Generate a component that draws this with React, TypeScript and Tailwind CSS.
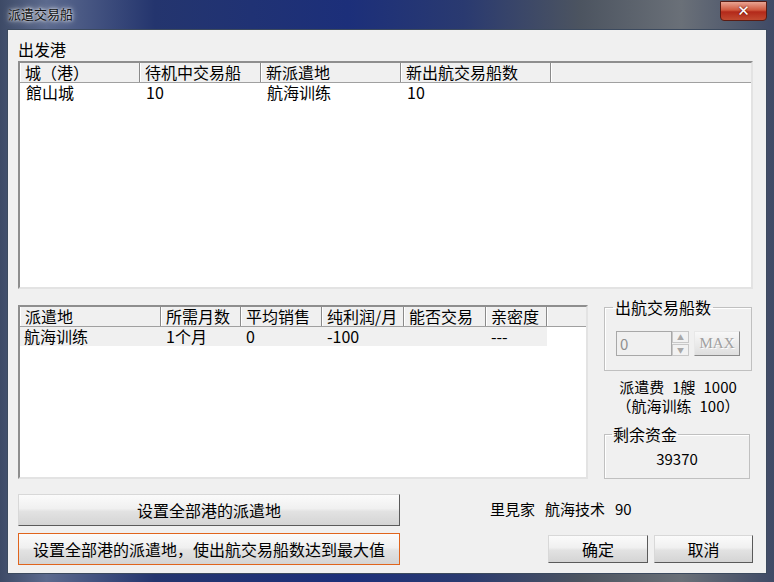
import React from 'react';

const font = { fontFamily: '"Noto Sans CJK SC", "Liberation Sans", sans-serif' };

interface Col {
  title: string;
  width: number;
}

const HeaderRow: React.FC<{ cols: Col[] }> = ({ cols }) => (
  <div className="flex h-[20px] shrink-0 border-b border-b-[#a0a0a0] bg-[#f0f0f0]">
    {cols.map((c) => (
      <div
        key={c.title}
        className="h-full shrink-0 border-r border-r-[#8a8a8a] pl-[5px] leading-[19px] shadow-[inset_1px_0_0_#ffffff]"
        style={{ width: c.width }}
      >
        {c.title}
      </div>
    ))}
    <div className="flex-1 shadow-[inset_1px_0_0_#ffffff]" />
  </div>
);

const SunkenBox: React.FC<{ className?: string; children: React.ReactNode }> = ({ className, children }) => (
  <div className={`border-2 border-t-[#8e8e8e] border-l-[#8e8e8e] border-r-[#e3e3e3] border-b-[#e3e3e3] bg-white ${className ?? ''}`}>
    <div className="flex h-full flex-col">{children}</div>
  </div>
);

const WinButton: React.FC<{ className?: string; children: React.ReactNode; focused?: boolean }> = ({
  className,
  children,
  focused,
}) => (
  <div
    className={`flex items-center justify-center border ${
      focused ? 'border-[#e0641c]' : 'border-t-[#d8d8d8] border-l-[#d8d8d8] border-r-[#5a5a5a] border-b-[#5a5a5a]'
    } bg-[linear-gradient(#fbfbfb_0%,#f0f0f0_45%,#e2e2e2_55%,#d4d4d4_100%)] text-[16px] text-black ${className ?? ''}`}
  >
    {children}
  </div>
);

export default function App() {
  const topCols: Col[] = [
    { title: '城（港）', width: 120 },
    { title: '待机中交易船', width: 121 },
    { title: '新派遣地', width: 140 },
    { title: '新出航交易船数', width: 150 },
  ];
  const lowCols: Col[] = [
    { title: '派遣地', width: 141 },
    { title: '所需月数', width: 80 },
    { title: '平均销售', width: 81 },
    { title: '纯利润/月', width: 82 },
    { title: '能否交易', width: 82 },
    { title: '亲密度', width: 61 },
  ];

  return (
    <div
      className="flex h-[582px] w-[774px] flex-col bg-[linear-gradient(90deg,#3d4a66_0%,#5c6a8e_6%,#24356e_20%,#1c2f7a_45%,#2a3a70_60%,#4c5460_75%,#6a7078_88%,#3f4a66_100%)] text-[16px] text-black"
      style={font}
    >
      {/* title bar */}
      <div className="flex h-[29px] shrink-0 items-start justify-between pl-[8px]">
        <div className="mt-[6px] text-[13px] leading-[16px] text-[#111] [text-shadow:0_0_6px_#ffffff,0_0_3px_#ffffff]">
          派遣交易船
        </div>
        <div className="mr-[7px] mt-[1px] flex h-[20px] w-[47px] items-center justify-center rounded-b-[4px] border border-[#5a1c14] bg-[linear-gradient(#e9a493_0%,#d0583e_45%,#b3291a_55%,#c24a30_100%)]">
          <span className="text-[15px] font-bold leading-none text-white [text-shadow:0_0_2px_#400]" style={{ fontFamily: '"DejaVu Sans", sans-serif' }}>
            ✕
          </span>
        </div>
      </div>

      {/* client area */}
      <div className="mx-[7px] mb-[8px] flex flex-1 flex-col border border-[#3c4a5e] bg-[#f0f0f0] pl-[10px] pr-[13px]">
        <div className="mt-[8px] h-[22px] leading-[22px]">出发港</div>

        <SunkenBox className="mt-[1px] h-[228px]">
          <HeaderRow cols={topCols} />
          <div className="flex h-[20px] leading-[18px]">
            <div className="w-[120px] pl-[6px]">館山城</div>
            <div className="w-[121px] pl-[6px]">10</div>
            <div className="w-[140px] pl-[6px]">航海训练</div>
            <div className="w-[150px] pl-[6px]">10</div>
          </div>
        </SunkenBox>

        <div className="mt-[16px] flex h-[174px] gap-[16px]">
          <SunkenBox className="h-full w-[570px]">
            <HeaderRow cols={lowCols} />
            <div className="flex h-[19px] w-[527px] bg-[#f0f0f0] leading-[18px]">
              <div className="w-[141px] pl-[4px]">航海训练</div>
              <div className="w-[80px] pl-[5px]">1个月</div>
              <div className="w-[81px] pl-[5px]">0</div>
              <div className="w-[82px] pl-[5px]">-100</div>
              <div className="w-[82px] pl-[5px]" />
              <div className="w-[61px] pl-[5px]">---</div>
            </div>
          </SunkenBox>

          <div className="flex w-[148px] flex-col">
            <fieldset className="-mt-[7px] h-[74px] border border-[#c0c0c0] px-[11px] pt-[15px] shadow-[inset_1px_1px_0_#ffffff]">
              <legend className="ml-[-3px] px-[2px] leading-[18px]">出航交易船数</legend>
              <div className="flex h-[25px] items-center">
                <div className="flex h-[25px] w-[56px] items-center border border-[#a8a8a8] bg-[#f0f0f0] pl-[3px] text-[15px] leading-none text-[#8f8f8f]">
                  0
                </div>
                <div className="flex h-[25px] w-[17px] flex-col">
                  <div className="flex h-[12px] items-center justify-center border border-[#c8c8c8] bg-[#f2f2f2] text-[7px] leading-none text-[#a8a8a8]">
                    ▲
                  </div>
                  <div className="mt-[1px] flex h-[12px] items-center justify-center border border-[#c8c8c8] bg-[#f2f2f2] text-[7px] leading-none text-[#a8a8a8]">
                    ▼
                  </div>
                </div>
                <div
                  className="ml-[5px] flex h-[25px] w-[46px] items-center justify-center border border-t-[#e8e8e8] border-l-[#e8e8e8] border-r-[#8a8a8a] border-b-[#8a8a8a] bg-[linear-gradient(#f8f8f8,#dedede)] text-[15px] text-[#a0a0a0] [text-shadow:1px_1px_0_#ffffff]"
                  style={{ fontFamily: '"Liberation Serif", serif' }}
                >
                  MAX
                </div>
              </div>
            </fieldset>
            <div className="mt-[6px] flex flex-col items-center text-[15px] leading-[19px]">
              <div className="flex gap-[8px]">
                <span>派遣费</span>
                <span>1艘</span>
                <span>1000</span>
              </div>
              <div className="flex">
                <span>（航海训练</span>
                <span className="ml-[8px]">100）</span>
              </div>
            </div>
            <fieldset className="mt-[10px] h-[54px] w-[146px] border border-[#c0c0c0] px-[8px] shadow-[inset_1px_1px_0_#ffffff]">
              <legend className="ml-[-1px] px-[1px] leading-[18px]">剩余资金</legend>
              <div className="mt-[7px] text-center text-[15px] leading-[18px]">39370</div>
            </fieldset>
          </div>
        </div>

        <div className="mt-[15px] flex">
          <div className="flex w-[382px] flex-col gap-[7px]">
            <WinButton className="h-[32px]">设置全部港的派遣地</WinButton>
            <WinButton className="h-[32px]" focused>
              设置全部港的派遣地，使出航交易船数达到最大值
            </WinButton>
          </div>
          <div className="flex flex-1 flex-col">
            <div className="ml-[90px] mt-[6px] flex gap-[10px] text-[15px] leading-[18px]">
              <span>里見家</span>
              <span>航海技术</span>
              <span>90</span>
            </div>
            <div className="ml-[148px] mt-[17px] flex gap-[6px]">
              <WinButton className="h-[28px] w-[100px]">确定</WinButton>
              <WinButton className="h-[28px] w-[99px]">取消</WinButton>
            </div>
          </div>
        </div>
      </div>
    </div>
  );
}
